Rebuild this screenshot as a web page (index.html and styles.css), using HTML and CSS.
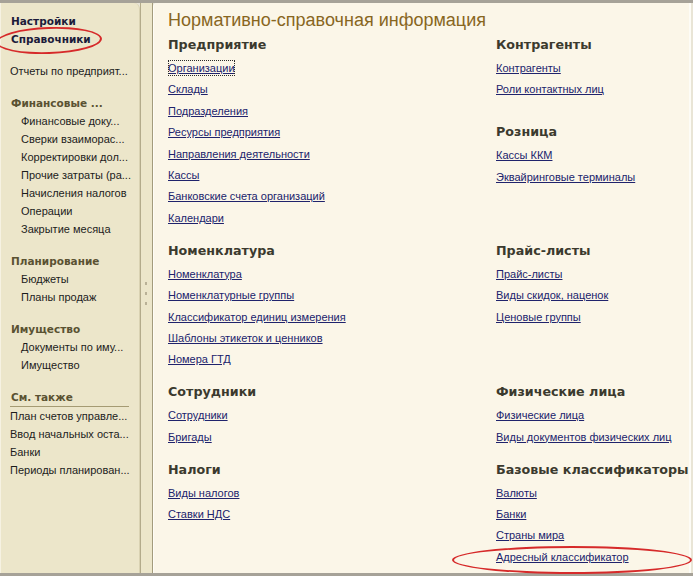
FILE: index.html
```html
<!DOCTYPE html>
<html lang="ru">
<head>
<meta charset="utf-8">
<title>Нормативно-справочная информация</title>
<link rel="stylesheet" href="styles.css">
</head>
<body>
<div class="window">
  <aside class="sidebar">
    <div class="group">
      <div class="nav-top">Настройки</div>
      <div class="nav-top">Справочники</div>
    </div>
    <div class="group">
      <div class="nav-item flat">Отчеты по предприят...</div>
    </div>
    <div class="group">
      <div class="nav-head">Финансовые ...</div>
      <div class="nav-item">Финансовые доку...</div>
      <div class="nav-item">Сверки взаиморас...</div>
      <div class="nav-item">Корректировки дол...</div>
      <div class="nav-item">Прочие затраты (ра...</div>
      <div class="nav-item">Начисления налогов</div>
      <div class="nav-item">Операции</div>
      <div class="nav-item">Закрытие месяца</div>
    </div>
    <div class="group">
      <div class="nav-head">Планирование</div>
      <div class="nav-item">Бюджеты</div>
      <div class="nav-item">Планы продаж</div>
    </div>
    <div class="group">
      <div class="nav-head">Имущество</div>
      <div class="nav-item">Документы по иму...</div>
      <div class="nav-item">Имущество</div>
    </div>
    <div class="group">
      <div class="nav-head see-also">См. также</div>
      <div class="nav-item flat">План счетов управле...</div>
      <div class="nav-item flat">Ввод начальных оста...</div>
      <div class="nav-item flat">Банки</div>
      <div class="nav-item flat">Периоды планирован...</div>
    </div>
  </aside>
  <div class="splitter">
    <span class="grip"></span>
    <span class="grip"></span>
    <span class="grip"></span>
  </div>
  <main class="content">
    <h1 class="title">Нормативно-справочная информация</h1>
    <div class="grid">
      <section class="sec">
        <h2 class="sec-head">Предприятие</h2>
        <div class="links">
          <a class="link focused" href="#">Организации</a>
          <a class="link" href="#">Склады</a>
          <a class="link" href="#">Подразделения</a>
          <a class="link" href="#">Ресурсы предприятия</a>
          <a class="link" href="#">Направления деятельности</a>
          <a class="link" href="#">Кассы</a>
          <a class="link" href="#">Банковские счета организаций</a>
          <a class="link" href="#">Календари</a>
        </div>
      </section>
      <div class="stack">
        <section class="sec">
          <h2 class="sec-head">Контрагенты</h2>
          <div class="links">
            <a class="link" href="#">Контрагенты</a>
            <a class="link" href="#">Роли контактных лиц</a>
          </div>
        </section>
        <section class="sec sec-next">
          <h2 class="sec-head">Розница</h2>
          <div class="links">
            <a class="link" href="#">Кассы ККМ</a>
            <a class="link" href="#">Эквайринговые терминалы</a>
          </div>
        </section>
      </div>

      <section class="sec">
        <h2 class="sec-head">Номенклатура</h2>
        <div class="links">
          <a class="link" href="#">Номенклатура</a>
          <a class="link" href="#">Номенклатурные группы</a>
          <a class="link" href="#">Классификатор единиц измерения</a>
          <a class="link" href="#">Шаблоны этикеток и ценников</a>
          <a class="link" href="#">Номера ГТД</a>
        </div>
      </section>
      <section class="sec">
        <h2 class="sec-head">Прайс-листы</h2>
        <div class="links">
          <a class="link" href="#">Прайс-листы</a>
          <a class="link" href="#">Виды скидок, наценок</a>
          <a class="link" href="#">Ценовые группы</a>
        </div>
      </section>

      <section class="sec">
        <h2 class="sec-head">Сотрудники</h2>
        <div class="links">
          <a class="link" href="#">Сотрудники</a>
          <a class="link" href="#">Бригады</a>
        </div>
      </section>
      <section class="sec">
        <h2 class="sec-head">Физические лица</h2>
        <div class="links">
          <a class="link" href="#">Физические лица</a>
          <a class="link" href="#">Виды документов физических лиц</a>
        </div>
      </section>

      <section class="sec">
        <h2 class="sec-head">Налоги</h2>
        <div class="links">
          <a class="link" href="#">Виды налогов</a>
          <a class="link" href="#">Ставки НДС</a>
        </div>
      </section>
      <section class="sec">
        <h2 class="sec-head">Базовые классификаторы</h2>
        <div class="links">
          <a class="link" href="#">Валюты</a>
          <a class="link" href="#">Банки</a>
          <a class="link" href="#">Страны мира</a>
          <a class="link" href="#">Адресный классификатор</a>
        </div>
      </section>
    </div>
  </main>
  <div class="mark mark-side"></div>
  <div class="mark mark-main"></div>
</div>
</body>
</html>
```

FILE: styles.css
```css
* { box-sizing: border-box; margin: 0; padding: 0; }

html, body {
  width: 693px;
  height: 576px;
  overflow: hidden;
  background: #a8a49a;
}

body {
  font-family: "Liberation Sans", Arial, sans-serif;
}

.window {
  position: relative;
  display: flex;
  height: 576px;
  border-top: 3px solid #a6a298;
  border-bottom: 3px solid #a6a298;
  background: #e9e5d6;
}

/* ---------- sidebar ---------- */
.sidebar {
  width: 140px;
  flex: none;
  background: #ece6ca;
  border-left: 1px solid #f6f2e2;
  border-right: 1px solid #d9d2b2;
  border-top-right-radius: 6px;
  padding: 9px 0 0 9px;
  display: flex;
  flex-direction: column;
  gap: 14px;
}

.group { display: flex; flex-direction: column; }

.nav-top {
  font-family: "DejaVu Sans", Verdana, sans-serif;
  font-weight: bold;
  font-size: 10.5px;
  line-height: 18px;
  color: #1b1b3a;
  padding-left: 1px;
}

.nav-head {
  font-family: "DejaVu Sans", Verdana, sans-serif;
  font-weight: bold;
  font-size: 10.5px;
  line-height: 18px;
  color: #5a5232;
  padding-left: 1px;
}

.nav-head.see-also {
  border-bottom: 1px solid #a59b73;
  width: 119px;
}

.nav-item {
  font-size: 11px;
  line-height: 18px;
  color: #1c1c1c;
  padding-left: 11px;
  white-space: nowrap;
}

.nav-item.flat { padding-left: 0; }

/* ---------- splitter ---------- */
.splitter {
  width: 13px;
  flex: none;
  background: #ece6ca;
  border-left: 1px solid #b3ab8b;
  border-right: 1px solid #a39b7c;
  display: flex;
  flex-direction: column;
  align-items: center;
  justify-content: center;
  gap: 7px;
  padding-top: 10px;
  padding-right: 1px;
}

.grip {
  width: 2px;
  height: 3px;
  background: #b9b196;
}

/* ---------- content ---------- */
.content {
  flex: 1;
  background: #fbf6e8;
  border-left: 1px solid #fffdf6;
  border-right: 2px solid #fdfcf6;
  margin-right: 3px;
  border-top-left-radius: 4px;
  padding: 6px 0 0 14px;
}

.title {
  font-family: "Liberation Sans", Arial, sans-serif;
  font-weight: normal;
  font-size: 18px;
  line-height: 22px;
  color: #88661f;
  white-space: nowrap;
}

.grid {
  margin-top: 6px;
  display: grid;
  grid-template-columns: 328px 1fr;
  row-gap: 17px;
  align-items: start;
}

.stack { display: flex; flex-direction: column; }

.sec-next { margin-top: 27px; }

.sec-head {
  font-family: "DejaVu Sans", Verdana, sans-serif;
  font-weight: bold;
  font-size: 12.7px;
  line-height: 16px;
  color: #3b3a2e;
  white-space: nowrap;
  margin-bottom: 7px;
}

.links {
  display: flex;
  flex-direction: column;
  align-items: flex-start;
  gap: 5.4px;
}

.link {
  font-size: 11px;
  line-height: 16px;
  color: #20236c;
  text-decoration: underline;
  white-space: nowrap;
}

.link.focused {
  outline: 1px dotted #2a2a2a;
  outline-offset: -1px;
}

/* ---------- annotation marks ---------- */
.mark {
  position: absolute;
  border: 2px solid #d62a2a;
  border-radius: 50%;
}

.mark-side {
  left: -4px;
  top: 24px;
  width: 106px;
  height: 27px;
  transform: rotate(-2deg);
}

.mark-main {
  left: 452px;
  top: 543px;
  width: 240px;
  height: 28px;
}
```
